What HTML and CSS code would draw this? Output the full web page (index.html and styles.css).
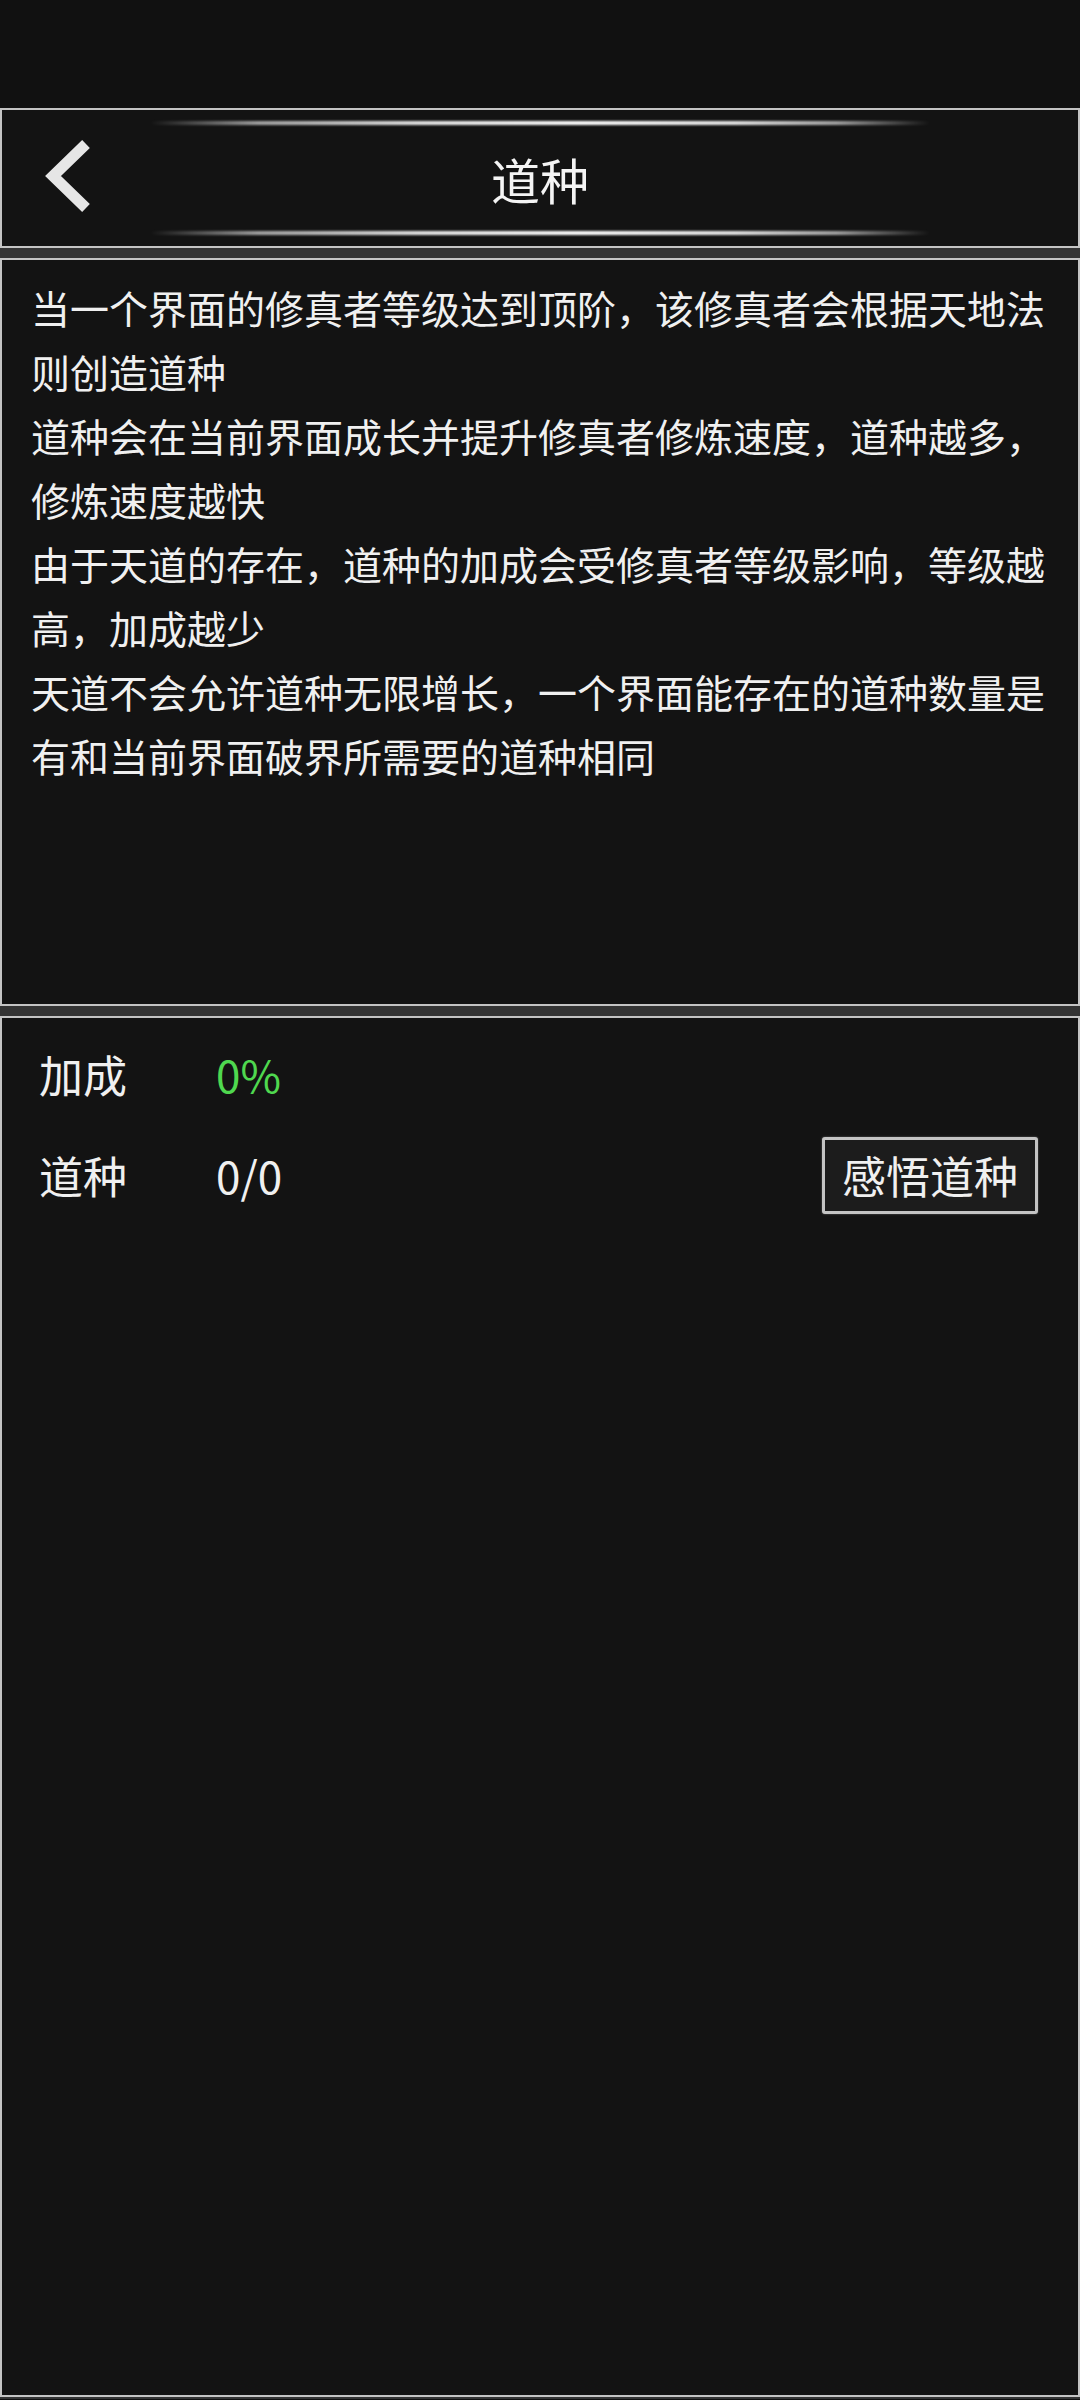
FILE: index.html
```html
<!DOCTYPE html>
<html lang="zh-CN">
<head>
<meta charset="utf-8">
<title>道种</title>
<link rel="stylesheet" href="styles.css">
</head>
<body>
<div class="status"></div>
<main class="stack">
  <header class="panel head">
    <div class="glow"></div>
    <div class="head-row">
      <div class="back">
        <svg width="60" height="90" viewBox="0 0 60 90"><polyline points="48,11 15,43 48,75" fill="none" stroke="#e6e6e6" stroke-width="11" stroke-linejoin="miter" stroke-linecap="butt"/></svg>
      </div>
      <h1 class="title">道种</h1>
      <div></div>
    </div>
    <div class="glow"></div>
  </header>
  <section class="panel intro">
    <p>当一个界面的修真者等级达到顶阶，该修真者会根据天地法则创造道种</p>
    <p>道种会在当前界面成长并提升修真者修炼速度，道种越多，修炼速度越快</p>
    <p>由于天道的存在，道种的加成会受修真者等级影响，等级越高，加成越少</p>
    <p>天道不会允许道种无限增长，一个界面能存在的道种数量是有和当前界面破界所需要的道种相同</p>
  </section>
  <section class="panel stats">
    <div class="row">
      <span class="label">加成</span>
      <span class="value green">0%</span>
    </div>
    <div class="row">
      <span class="label">道种</span>
      <span class="value">0/0</span>
      <button class="btn">感悟道种</button>
    </div>
  </section>
</main>
</body>
</html>
```
FILE: styles.css
```css
* { box-sizing: border-box; }
html, body {
  margin: 0;
  padding: 0;
  background: #111111;
  font-family: "Noto Sans CJK SC", "Noto Sans", sans-serif;
  color: #f0f0f0;
}
.status {
  height: 108px;
  background: #111111;
}
.stack {
  display: flex;
  flex-direction: column;
  gap: 10px;
  background: #343434;
  padding-bottom: 2px;
}
.panel {
  border: 2px solid #c4c4c4;
  background: #131313;
}
.head {
  height: 140px;
  display: flex;
  flex-direction: column;
  justify-content: space-between;
  padding: 11px 0;
}
.glow {
  align-self: center;
  width: 780px;
  height: 4px;
  background: linear-gradient(90deg, rgba(255,255,255,0) 0%, rgba(210,210,210,0.75) 14%, rgba(240,240,240,0.95) 35%, #ffffff 55%, rgba(240,240,240,0.95) 75%, rgba(210,210,210,0.75) 88%, rgba(255,255,255,0) 100%);
  filter: blur(0.8px);
}
.head-row {
  flex: 1;
  display: grid;
  grid-template-columns: 1fr auto 1fr;
  align-items: center;
}
.back {
  padding-left: 36px;
  display: flex;
  align-items: center;
}
.back svg { display: block; }
.title {
  margin: 0;
  font-size: 49px;
  font-weight: 400;
  line-height: 1;
  color: #f4f4f4;
}
.intro {
  height: 748px;
  padding: 15px 20px 0 29px;
  font-size: 39px;
  line-height: 64px;
}
.intro p { margin: 0; }
.stats {
  height: 1381px;
  padding: 16px 40px 0 37px;
  display: flex;
  flex-direction: column;
  gap: 21px;
}
.row {
  height: 80px;
  display: flex;
  align-items: center;
  font-size: 44px;
  line-height: 1;
}
.label { width: 177px; }
.value { flex: 1; }
.green { color: #4fd84f; }
.btn {
  width: 216px;
  height: 77px;
  border: 3px solid #c4c4c4;
  border-radius: 3px;
  background: #1c1c1c;
  color: #f0f0f0;
  font-family: "Noto Sans CJK SC", "Noto Sans", sans-serif;
  font-size: 44px;
  line-height: 1;
  padding: 0;
  display: flex;
  align-items: center;
  justify-content: center;
  box-shadow: 0 0 2px rgba(200,200,200,0.5);
}
```
